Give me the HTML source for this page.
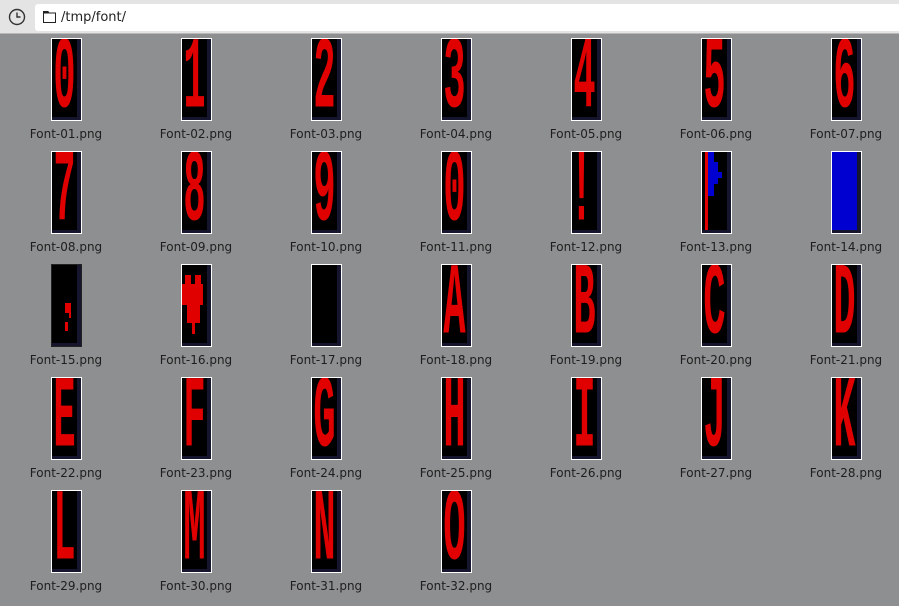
<!DOCTYPE html>
<html><head><meta charset="utf-8"><style>
*{margin:0;padding:0;box-sizing:border-box}
body{width:899px;height:606px;overflow:hidden;background:#8e8f90;font-family:"DejaVu Sans","Liberation Sans",sans-serif;position:relative}
.bar{position:absolute;left:0;top:0;width:899px;height:34px;background:#e4e4e4;border-bottom:1px solid #b8b8b8}
.addr{position:absolute;left:35px;top:4px;width:870px;height:27px;background:#fff;border-radius:3px;font-size:13px;color:#222;padding:6px 0 0 26px}
.c{position:absolute;width:130px;text-align:center}
.t{margin:0 auto;width:31px;height:83px;border:1px solid #fff;background:#000;position:relative;overflow:hidden}
.t:after{content:"";position:absolute;right:0;top:0;width:4px;height:100%;background:#16152e}
.t:before{content:"";position:absolute;left:0;bottom:0;width:100%;height:3px;background:#16152e;z-index:1}
.t svg{position:absolute;left:0;top:0}
.g{position:absolute;left:0;top:-7px;width:26px;font:bold 37px/36px "Liberation Mono",monospace;color:#e00000;text-align:center;transform:scaleY(2.75);transform-origin:0 0}
.c span{display:block;margin-top:6px;font-size:12px;color:#1e1e1e}
</style></head><body>
<div class="bar">
<svg style="position:absolute;left:8px;top:8px" width="18" height="18" viewBox="0 0 18 18"><circle cx="9" cy="9" r="7.5" fill="none" stroke="#333" stroke-width="1.4"/><path d="M9 4.5V9H12.5" fill="none" stroke="#333" stroke-width="1.4"/></svg>
<div class="addr"><svg style="position:absolute;left:8px;top:7px" width="13" height="12" viewBox="0 0 13 12"><path d="M0.5 0.5H5L6 2H12.5V11.5H0.5Z" fill="#fff" stroke="#222"/><rect x="0.5" y="0.5" width="5" height="2" fill="#222"/></svg>/tmp/font/</div>
</div>

<div class="c" style="left:1px;top:38px"><div class="t"><div class="g">0</div></div><span>Font-01.png</span></div>
<div class="c" style="left:131px;top:38px"><div class="t"><div class="g">1</div></div><span>Font-02.png</span></div>
<div class="c" style="left:261px;top:38px"><div class="t"><div class="g">2</div></div><span>Font-03.png</span></div>
<div class="c" style="left:391px;top:38px"><div class="t"><div class="g">3</div></div><span>Font-04.png</span></div>
<div class="c" style="left:521px;top:38px"><div class="t"><div class="g">4</div></div><span>Font-05.png</span></div>
<div class="c" style="left:651px;top:38px"><div class="t"><div class="g">5</div></div><span>Font-06.png</span></div>
<div class="c" style="left:781px;top:38px"><div class="t"><div class="g">6</div></div><span>Font-07.png</span></div>

<div class="c" style="left:1px;top:151px"><div class="t"><div class="g">7</div></div><span>Font-08.png</span></div>
<div class="c" style="left:131px;top:151px"><div class="t"><div class="g">8</div></div><span>Font-09.png</span></div>
<div class="c" style="left:261px;top:151px"><div class="t"><div class="g">9</div></div><span>Font-10.png</span></div>
<div class="c" style="left:391px;top:151px"><div class="t"><div class="g">0</div></div><span>Font-11.png</span></div>
<div class="c" style="left:521px;top:151px"><div class="t"><div class="g" style="left:-3px">!</div></div><span>Font-12.png</span></div>
<div class="c" style="left:651px;top:151px"><div class="t"><svg width="29" height="81"><rect x="3" y="0" width="3" height="79" fill="#e00000"/><path d="M6 0H12V10H16V20H20V26H16V32H12V44H6Z" fill="#0000d0"/></svg></div><span>Font-13.png</span></div>
<div class="c" style="left:781px;top:151px"><div class="t"><svg width="29" height="81"><rect x="0" y="0" width="25" height="78" fill="#0000d0"/></svg></div><span>Font-14.png</span></div>

<div class="c" style="left:1px;top:264px"><div class="t" style="border-color:#222"><svg width="29" height="81"><rect x="13" y="38" width="6" height="10" fill="#e00000"/><rect x="17" y="45" width="2" height="8" fill="#e00000"/><rect x="13" y="57" width="3" height="9" fill="#e00000"/></svg></div><span>Font-15.png</span></div>
<div class="c" style="left:131px;top:264px"><div class="t"><svg width="29" height="81"><path d="M3 10H9V19H13V10H19V19H21V40H18V58H13V69H10V58H5V40H0V19H3Z" fill="#e00000"/></svg></div><span>Font-16.png</span></div>
<div class="c" style="left:261px;top:264px"><div class="t"></div><span>Font-17.png</span></div>
<div class="c" style="left:391px;top:264px"><div class="t"><div class="g">A</div></div><span>Font-18.png</span></div>
<div class="c" style="left:521px;top:264px"><div class="t"><div class="g">B</div></div><span>Font-19.png</span></div>
<div class="c" style="left:651px;top:264px"><div class="t"><div class="g">C</div></div><span>Font-20.png</span></div>
<div class="c" style="left:781px;top:264px"><div class="t"><div class="g">D</div></div><span>Font-21.png</span></div>

<div class="c" style="left:1px;top:377px"><div class="t"><div class="g">E</div></div><span>Font-22.png</span></div>
<div class="c" style="left:131px;top:377px"><div class="t"><div class="g">F</div></div><span>Font-23.png</span></div>
<div class="c" style="left:261px;top:377px"><div class="t"><div class="g">G</div></div><span>Font-24.png</span></div>
<div class="c" style="left:391px;top:377px"><div class="t"><div class="g">H</div></div><span>Font-25.png</span></div>
<div class="c" style="left:521px;top:377px"><div class="t"><div class="g">I</div></div><span>Font-26.png</span></div>
<div class="c" style="left:651px;top:377px"><div class="t"><div class="g">J</div></div><span>Font-27.png</span></div>
<div class="c" style="left:781px;top:377px"><div class="t"><div class="g">K</div></div><span>Font-28.png</span></div>

<div class="c" style="left:1px;top:490px"><div class="t"><div class="g">L</div></div><span>Font-29.png</span></div>
<div class="c" style="left:131px;top:490px"><div class="t"><div class="g">M</div></div><span>Font-30.png</span></div>
<div class="c" style="left:261px;top:490px"><div class="t"><div class="g">N</div></div><span>Font-31.png</span></div>
<div class="c" style="left:391px;top:490px"><div class="t"><div class="g">O</div></div><span>Font-32.png</span></div>
</body></html>
